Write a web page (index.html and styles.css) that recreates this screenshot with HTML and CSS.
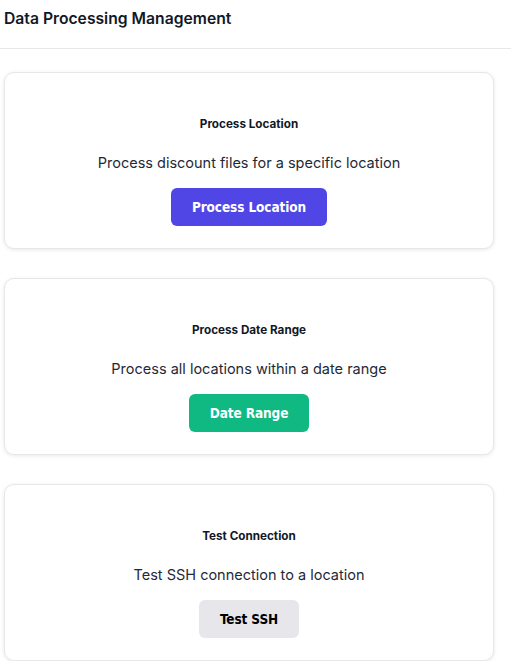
FILE: index.html
```html
<!DOCTYPE html>
<html>
<head>
<meta charset="utf-8">
<link rel="stylesheet" href="styles.css">
</head>
<body>
<header class="topbar">
  <h1 class="page-title">Data Processing Management</h1>
</header>
<main class="cards">
  <section class="card">
    <h2 class="card-title">Process Location</h2>
    <p class="card-desc">Process discount files for a specific location</p>
    <button class="btn btn-indigo">Process Location</button>
  </section>
  <section class="card">
    <h2 class="card-title">Process Date Range</h2>
    <p class="card-desc">Process all locations within a date range</p>
    <button class="btn btn-green">Date Range</button>
  </section>
  <section class="card">
    <h2 class="card-title">Test Connection</h2>
    <p class="card-desc">Test SSH connection to a location</p>
    <button class="btn btn-gray">Test SSH</button>
  </section>
</main>
</body>
</html>
```

FILE: styles.css
```css
html, body {
  margin: 0;
  padding: 0;
  background: #ffffff;
}
body {
  font-family: Inter, "Noto Sans", sans-serif;
  color: #111827;
  width: 511px;
}
.topbar {
  height: 49px;
  border-bottom: 1px solid #e5e7eb;
  box-sizing: border-box;
  padding: 9px 4px 0;
}
.page-title {
  margin: 0;
  font-size: 15.7px;
  line-height: 20px;
  font-weight: 600;
  color: #111827;
}
.cards {
  display: flex;
  flex-direction: column;
  gap: 29.5px;
  padding: 23px 17px 0 4px;
}
.card {
  height: 176.5px;
  box-sizing: border-box;
  border: 1px solid #e5e7eb;
  border-radius: 10px;
  box-shadow: 0 1px 4px rgba(0, 0, 0, 0.09);
  display: flex;
  flex-direction: column;
  align-items: center;
  padding-top: 43px;
  background: #fff;
}
.card-title {
  margin: 0;
  font-size: 11.7px;
  line-height: 16px;
  font-weight: 700;
  color: #111827;
}
.card-desc {
  margin: 21px 0 0;
  font-size: 14.5px;
  line-height: 20px;
  color: #1f2937;
}
.btn {
  margin-top: 15px;
  height: 38px;
  padding: 0 21px;
  border: none;
  border-radius: 6px;
  font-family: "DejaVu Sans Condensed", "DejaVu Sans", sans-serif;
  font-weight: 700;
  font-size: 13.5px;
  letter-spacing: -0.1px;
  cursor: pointer;
}
.btn-indigo {
  background: #4f46e5;
  color: #ffffff;
}
.btn-green {
  background: #10b981;
  color: #ffffff;
}
.btn-gray {
  background: #e7e7eb;
  color: #000000;
}
```
